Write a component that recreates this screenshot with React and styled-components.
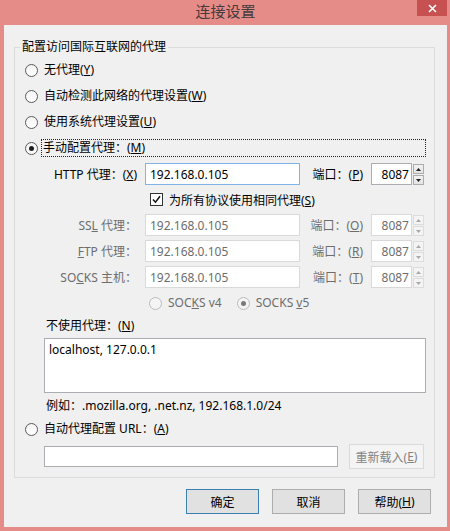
import React from "react";
import styled, { createGlobalStyle, css } from "styled-components";

const GlobalStyle = createGlobalStyle`
  html, body { margin: 0; padding: 0; background: #e58b88; }
  * { box-sizing: border-box; }
  body {
    font-family: "Noto Sans", "Noto Sans CJK SC", sans-serif;
    font-size: 12px;
    color: #000;
  }
`;

const Window = styled.div`
  width: 450px;
  height: 531px;
  background: #e58b88;
  display: flex;
  flex-direction: column;
  padding: 0 3px 4px 4px;
`;

const TitleBar = styled.div`
  position: relative;
  height: 25px;
  padding-bottom: 4px;
  display: flex;
  align-items: center;
  justify-content: center;
  font-family: "Noto Sans CJK SC", sans-serif;
  font-size: 15px;
  color: #473a3a;
`;

const CloseButton = styled.div`
  position: absolute;
  top: 0;
  right: 0;
  width: 30px;
  height: 16px;
  background: #c75050;
  display: flex;
  align-items: center;
  justify-content: center;
`;

const Panel = styled.div`
  flex: 1;
  background: #f0f0f0;
  padding: 14px 12px 13px 10px;
  display: flex;
  flex-direction: column;
`;

const Group = styled.fieldset`
  margin: 0;
  padding: 2px 0 8px 0;
  border: 1px solid #dcdcdc;
  min-width: 0;
`;

const GroupTitle = styled.legend`
  margin-left: 5px;
  padding: 0 2px;
  line-height: 16px;
  font-size: 12px;
`;

const Body = styled.div`
  padding-left: 10px;
  display: flex;
  flex-direction: column;
`;

const Key = styled.span`
  text-decoration: underline;
  text-underline-offset: 1px;
`;

const OptionRow = styled.div`
  height: ${(p) => p.$h || 26}px;
  display: flex;
  align-items: center;
  gap: 6px;
  margin-left: ${(p) => p.$indent || 0}px;
`;

const RadioCircle = styled.span`
  width: 13px;
  height: 13px;
  border-radius: 50%;
  border: 1px solid ${(p) => (p.$disabled ? "#bcbcbc" : "#5a5a5a")};
  background: ${(p) => (p.$disabled ? "#f4f4f4" : "linear-gradient(#f4f4f4, #ffffff)")};
  display: flex;
  align-items: center;
  justify-content: center;
  flex-shrink: 0;
  &::after {
    content: "";
    width: 5px;
    height: 5px;
    border-radius: 50%;
    background: ${(p) => (p.$disabled ? "#7a7a7a" : "#1f1f1f")};
    display: ${(p) => (p.$checked ? "block" : "none")};
  }
`;

const OptionText = styled.span`
  line-height: 16px;
  color: ${(p) => (p.$disabled ? "#6d6d6d" : "#000")};
  ${(p) =>
    p.$focused &&
    css`
      flex: 1;
      margin-left: -3px;
      margin-right: 8px;
      padding: 0 1px;
      border: 1px dotted #222;
    `}
`;

const Radio = ({ checked, disabled, focused, children, h, indent }) => (
  <OptionRow $h={h} $indent={indent}>
    <RadioCircle $checked={checked} $disabled={disabled} />
    <OptionText $disabled={disabled} $focused={focused}>
      {children}
    </OptionText>
  </OptionRow>
);

const FieldRow = styled.div`
  height: ${(p) => p.$h || 26}px;
  display: flex;
  align-items: center;
`;

const FieldLabel = styled.span`
  width: 112px;
  text-align: right;
  margin-right: 8px;
  white-space: nowrap;
  color: ${(p) => (p.$disabled ? "#6d6d6d" : "#000")};
`;

const PortLabel = styled(FieldLabel)`
  width: 63px;
`;

const TextBox = styled.div`
  width: ${(p) => p.$w}px;
  height: ${(p) => p.$hgt || 22}px;
  background: #fff;
  border: 1px solid
    ${(p) => (p.$focused ? "#7eb4ea" : p.$disabled ? "#d9d9d9" : "#abadb3")};
  color: ${(p) => (p.$disabled ? "#6d6d6d" : "#000")};
  display: flex;
  align-items: center;
  justify-content: ${(p) => (p.$right ? "flex-end" : "flex-start")};
  padding: 0 ${(p) => (p.$right ? 2 : 4)}px 0 4px;
  white-space: nowrap;
  overflow: hidden;
`;

const Spinner = styled.div`
  width: 12px;
  height: 22px;
  display: flex;
  flex-direction: column;
  gap: 1px;
  padding: 1px 0 0 1px;
`;

const SpinPart = styled.span`
  flex: 1;
  border: 1px solid ${(p) => (p.$disabled ? "#dcdcdc" : "#acacac")};
  background: ${(p) => (p.$disabled ? "#f4f4f4" : "linear-gradient(#f2f2f2, #e4e4e4)")};
  display: flex;
  align-items: center;
  justify-content: center;
`;

const Arrow = ({ up, disabled }) => (
  <svg width="5" height="3" viewBox="0 0 5 3">
    <path
      d={up ? "M0 3 L2.5 0 L5 3 Z" : "M0 0 L2.5 3 L5 0 Z"}
      fill={disabled ? "#a8a8a8" : "#222"}
    />
  </svg>
);

const PortSpin = ({ disabled }) => (
  <>
    <TextBox $w={41} $right $disabled={disabled}>
      8087
    </TextBox>
    <Spinner>
      <SpinPart $disabled={disabled}>
        <Arrow up disabled={disabled} />
      </SpinPart>
      <SpinPart $disabled={disabled}>
        <Arrow disabled={disabled} />
      </SpinPart>
    </Spinner>
  </>
);

const ProxyRow = ({ label, port, disabled, focused }) => (
  <FieldRow>
    <FieldLabel $disabled={disabled}>{label}</FieldLabel>
    <TextBox $w={155} $disabled={disabled} $focused={focused}>
      192.168.0.105
    </TextBox>
    <PortLabel $disabled={disabled}>{port}</PortLabel>
    <PortSpin disabled={disabled} />
  </FieldRow>
);

const CheckRow = styled.div`
  height: 25px;
  display: flex;
  align-items: center;
  gap: 6px;
  margin-left: 125px;
`;

const CheckBox = styled.span`
  width: 13px;
  height: 13px;
  border: 1px solid #333;
  background: #fff;
  display: flex;
  align-items: center;
  justify-content: center;
`;

const VersionRow = styled.div`
  height: 26px;
  display: flex;
  align-items: center;
  gap: 15px;
  margin-left: 124px;
`;

const Caption = styled.div`
  height: ${(p) => p.$h}px;
  display: flex;
  align-items: center;
  margin-left: 21px;
`;

const TextArea = styled.div`
  margin: 4px 0 0 19px;
  width: 382px;
  height: 55px;
  background: #fff;
  border: 1px solid #abadb3;
  padding: 2px 4px;
  line-height: 18px;
`;

const UrlRow = styled.div`
  margin: 3px 0 0 19px;
  height: 25px;
  display: flex;
  align-items: center;
  gap: 11px;
`;

const Button = styled.div`
  width: ${(p) => p.$w || 73}px;
  height: 25px;
  display: flex;
  align-items: center;
  justify-content: center;
  background: ${(p) => (p.$disabled ? "#f4f4f4" : "#e1e1e1")};
  border: 1px solid
    ${(p) => (p.$default ? "#3c7fb1" : p.$disabled ? "#dadada" : "#adadad")};
  color: ${(p) => (p.$disabled ? "#838383" : "#000")};
`;

const ButtonRow = styled.div`
  margin-top: 11px;
  margin-right: 4px;
  display: flex;
  justify-content: flex-end;
  gap: 13px;
`;

export default function App() {
  return (
    <>
      <GlobalStyle />
      <Window>
        <TitleBar>
          连接设置
          <CloseButton>
            <svg width="9" height="9" viewBox="0 0 9 9">
              <path d="M1 1 L8 8 M8 1 L1 8" stroke="#fff" strokeWidth="1.6" />
            </svg>
          </CloseButton>
        </TitleBar>
        <Panel>
          <Group>
            <GroupTitle>配置访问国际互联网的代理</GroupTitle>
            <Body>
              <Radio>
                无代理(<Key>Y</Key>)
              </Radio>
              <Radio>
                自动检测此网络的代理设置(<Key>W</Key>)
              </Radio>
              <Radio>
                使用系统代理设置(<Key>U</Key>)
              </Radio>
              <Radio checked focused>
                手动配置代理：(<Key>M</Key>)
              </Radio>
              <ProxyRow
                focused
                label={<>HTTP 代理：(<Key>X</Key>)</>}
                port={<>端口：(<Key>P</Key>)</>}
              />
              <CheckRow>
                <CheckBox>
                  <svg width="9" height="9" viewBox="0 0 9 9">
                    <path d="M1 4.5 L3.5 7.2 L8 1.2" stroke="#111" strokeWidth="1.5" fill="none" />
                  </svg>
                </CheckBox>
                <span>
                  为所有协议使用相同代理(<Key>S</Key>)
                </span>
              </CheckRow>
              <ProxyRow
                disabled
                label={<>SS<Key>L</Key> 代理：</>}
                port={<>端口：(<Key>O</Key>)</>}
              />
              <ProxyRow
                disabled
                label={<><Key>F</Key>TP 代理：</>}
                port={<>端口：(<Key>R</Key>)</>}
              />
              <ProxyRow
                disabled
                label={<>SO<Key>C</Key>KS 主机：</>}
                port={<>端口：(<Key>T</Key>)</>}
              />
              <VersionRow>
                <Radio disabled>
                  SOC<Key>K</Key>S v4
                </Radio>
                <Radio disabled checked>
                  SOCKS <Key>v</Key>5
                </Radio>
              </VersionRow>
              <Caption $h={18}>
                <span>
                  不使用代理：(<Key>N</Key>)
                </span>
              </Caption>
              <TextArea>localhost, 127.0.0.1</TextArea>
              <Caption $h={24}>例如：.mozilla.org, .net.nz, 192.168.1.0/24</Caption>
              <Radio h={24}>
                自动代理配置 URL：(<Key>A</Key>)
              </Radio>
              <UrlRow>
                <TextBox $w={294} $hgt={21} />
                <Button $w={75} $disabled>
                  重新载入(<Key>E</Key>)
                </Button>
              </UrlRow>
            </Body>
          </Group>
          <ButtonRow>
            <Button $default>确定</Button>
            <Button>取消</Button>
            <Button>
              帮助(<Key>H</Key>)
            </Button>
          </ButtonRow>
        </Panel>
      </Window>
    </>
  );
}
